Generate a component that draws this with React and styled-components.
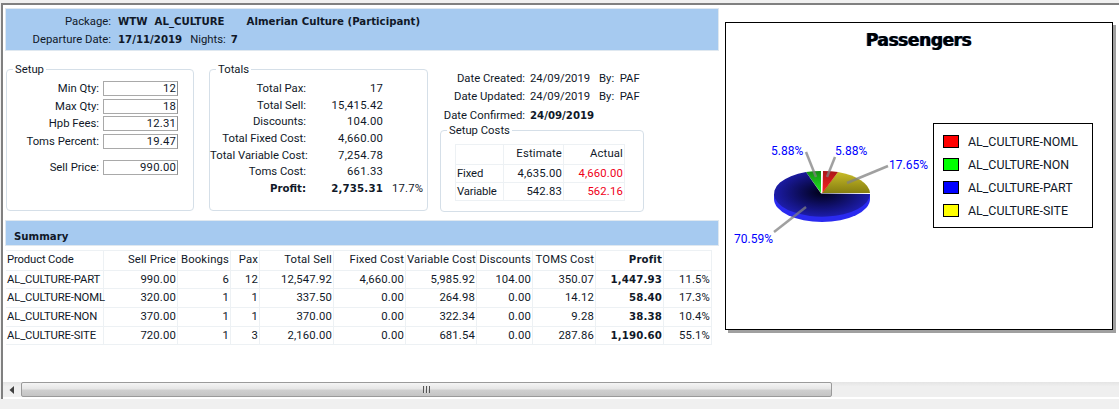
import React from 'react';
import styled, { createGlobalStyle } from 'styled-components';

const GlobalStyle = createGlobalStyle`
  html, body {
    margin: 0;
    padding: 0;
    background: #fff;
  }
  body {
    font-family: Roboto, "Noto Sans", sans-serif;
    font-size: 11.3px;
    color: #101828;
    overflow: hidden;
  }
`;

const BAND = '#a6caf0';
const LINE = '#d5dfe8';
const CELL = '#edf1f4';

const Page = styled.div`
  width: 1119px;
  height: 409px;
  display: flex;
  flex-direction: column;
  padding-top: 3px;
  box-sizing: border-box;
  background: #f0f0f0;
`;

const Frame = styled.div`
  height: 396px;
  display: flex;
  flex-direction: column;
  box-sizing: border-box;
  background: #fff;
  border-top: 2px solid #808080;
  border-left: 2px solid #808080;
  margin-left: 1px;
`;

const Main = styled.div`
  height: 377px;
  display: flex;
  gap: 7px;
  padding: 4px 0 0 3px;
  box-sizing: border-box;
`;

const Left = styled.div`
  width: 712px;
  display: flex;
  flex-direction: column;
`;

const Band = styled.div`
  background: ${BAND};
  height: ${p => p.$h}px;
  box-sizing: border-box;
  outline: 1px solid #dfe8f0;
`;

const HeadBand = styled(Band)`
  display: grid;
  grid-template-columns: 105px auto;
  grid-auto-rows: 18px;
  column-gap: 7px;
  padding-top: 4px;
  justify-content: start;
  line-height: 18px;
`;

const Caption = styled.span`
  text-align: right;
  white-space: nowrap;
`;

const Value = styled.span`
  display: flex;
`;

const Bold = styled.b`
  font-family: "DejaVu Sans", sans-serif;
  font-size: 10.2px;
  font-weight: 700;
  margin-left: ${p => p.$ml || 0}px;
  margin-right: ${p => p.$mr || 0}px;
  white-space: pre;
`;

const Middle = styled.div`
  height: 171px;
  display: flex;
  align-items: flex-start;
`;

const Group = styled.div`
  position: relative;
  box-sizing: border-box;
  width: ${p => p.$w}px;
  height: ${p => p.$h}px;
  margin-left: ${p => p.$ml || 0}px;
  margin-top: ${p => p.$mt}px;
  border: 1px solid ${LINE};
  border-radius: 4px;
`;

const Legend = styled.span`
  position: absolute;
  left: 6px;
  top: -8px;
  padding: 0 2px;
  background: #fff;
  line-height: 15px;
`;

const FieldList = styled.div`
  display: grid;
  grid-template-columns: 92px 75px;
  column-gap: 4px;
  grid-template-rows: 15px 15px 15px 15px 6px 15px;
  row-gap: 2.5px;
  padding-top: 11px;
  align-items: center;
`;

const FieldBox = styled.span`
  box-sizing: border-box;
  height: 15px;
  line-height: 13px;
  text-align: right;
  padding-right: 1px;
  border: 1px solid #a9a9a9;
  border-right-color: #8f8f8f;
  letter-spacing: 0.2px;
`;

const FieldGap = styled.div`
  grid-column: 1 / -1;
`;

const TotalsList = styled.div`
  display: grid;
  grid-template-columns: 96px 77px 40px;
  grid-auto-rows: 16.7px;
  padding-top: 11px;
  line-height: 16px;
`;

const TotalLabel = styled.span`
  text-align: right;
  white-space: nowrap;
`;

const TotalValue = styled.span`
  text-align: right;
  letter-spacing: 0.2px;
`;

const TotalPct = styled.span`
  padding-left: 9px;
  white-space: nowrap;
  letter-spacing: 0.2px;
`;

const InfoColumn = styled.div`
  width: 204px;
  margin-left: 12px;
  display: flex;
  flex-direction: column;
`;

const DateList = styled.div`
  display: grid;
  grid-template-columns: 90px 69px auto;
  grid-auto-rows: 18.5px;
  margin-top: 19.5px;
  margin-bottom: 5px;
  line-height: 18px;
  white-space: nowrap;
`;

const DateLabel = styled(Caption)`
  padding-right: 5px;
`;

const CostTable = styled.div`
  display: grid;
  grid-template-columns: 48px 60px 61px;
  grid-template-rows: 20px 18px 18px;
  margin: 13px 0 0 14px;
  border-top: 1px solid ${CELL};
  border-left: 1px solid ${CELL};
  width: max-content;
`;

const Cell = styled.div`
  box-sizing: border-box;
  border-right: 1px solid ${CELL};
  border-bottom: 1px solid ${CELL};
  padding: 0 1px;
  line-height: 17px;
  white-space: nowrap;
  text-align: ${p => (p.$left ? 'left' : 'right')};
  color: ${p => (p.$red ? '#f00018' : 'inherit')};
  letter-spacing: ${p => (p.$left ? '-0.15px' : '0.15px')};
`;

const SummaryBand = styled(Band)`
  padding: 8px 0 0 8px;
  line-height: 16px;
`;

const Sheet = styled.div`
  display: grid;
  grid-template-columns: 98px 74px 53px 29px 74px 72px 71px 56px 63px 68px 48px;
  grid-template-rows: 20px 18px 19px 19px 18px;
  margin-top: 5px;
  width: max-content;
  border-top: 1px solid ${CELL};
`;

const Chart = styled.div`
  width: 388px;
  height: 308px;
  margin-top: 13px;
  box-sizing: border-box;
  border: 1px solid #000;
  background: #fff;
  box-shadow: 3px 3px 0 #a0a0a0;
  display: flex;
  flex-direction: column;
`;

const ChartTitle = styled.div`
  height: 97px;
  padding-top: 6px;
  box-sizing: border-box;
  text-align: center;
  font-size: 17px;
  font-weight: 700;
  line-height: 22px;
  color: #000;
  font-family: "DejaVu Sans", sans-serif;
  text-shadow: -1px 0 0 #0a3a78;
  letter-spacing: -0.4px;
`;

const ChartBody = styled.div`
  display: flex;
  align-items: flex-start;
`;

const PieSvg = styled.svg`
  display: block;
  font-family: Roboto, sans-serif;
  font-size: 12px;
`;

const LegendBox = styled.div`
  width: 160px;
  height: 105px;
  margin-top: 3px;
  box-sizing: border-box;
  border: 1px solid #000;
  padding: 11px 0 0 9px;
  display: flex;
  flex-direction: column;
  gap: 10px;
  font-size: 12.4px;
`;

const LegendRow = styled.div`
  display: flex;
  align-items: center;
  gap: 9px;
  height: 13px;
`;

const Swatch = styled.span`
  width: 16px;
  height: 13px;
  box-sizing: border-box;
  border: 1px solid #000;
  background: ${p => p.$color};
`;

const Scroll = styled.div`
  height: 15px;
  display: flex;
  background: linear-gradient(#e4e4e4, #efefef 30%);
`;

const ScrollArrow = styled.div`
  width: 18px;
  display: flex;
  align-items: center;
  justify-content: center;
`;

const ScrollThumb = styled.div`
  width: 811px;
  box-sizing: border-box;
  border: 1px solid #9a9a9a;
  border-radius: 2px;
  background: linear-gradient(#f4f4f4, #e6e6e6 45%, #cfcfcf 55%, #c4c4c4);
  display: flex;
  align-items: center;
  justify-content: center;
`;

const Grip = styled.div`
  width: 7px;
  height: 7px;
  background: repeating-linear-gradient(90deg, #555 0 1px, #ddd 1px 2px, transparent 2px 3px);
`;

const heading = ['Product Code', 'Sell Price', 'Bookings', 'Pax', 'Total Sell', 'Fixed Cost', 'Variable Cost', 'Discounts', 'TOMS Cost', 'Profit', ''];

const rows = [
  ['AL_CULTURE-PART', '990.00', '6', '12', '12,547.92', '4,660.00', '5,985.92', '104.00', '350.07', '1,447.93', '11.5%'],
  ['AL_CULTURE-NOML', '320.00', '1', '1', '337.50', '0.00', '264.98', '0.00', '14.12', '58.40', '17.3%'],
  ['AL_CULTURE-NON', '370.00', '1', '1', '370.00', '0.00', '322.34', '0.00', '9.28', '38.38', '10.4%'],
  ['AL_CULTURE-SITE', '720.00', '1', '3', '2,160.00', '0.00', '681.54', '0.00', '287.86', '1,190.60', '55.1%'],
];

const legend = [
  ['AL_CULTURE-NOML', '#ff0000'],
  ['AL_CULTURE-NON', '#00ff00'],
  ['AL_CULTURE-PART', '#0000ff'],
  ['AL_CULTURE-SITE', '#ffff00'],
];

const totals = [
  ['Total Pax:', '17'],
  ['Total Sell:', '15,415.42'],
  ['Discounts:', '104.00'],
  ['Total Fixed Cost:', '4,660.00'],
  ['Total Variable Cost:', '7,254.78'],
  ['Toms Cost:', '661.33'],
];

function Pie() {
  return (
    <PieSvg width="207" height="130" viewBox="726 120 207 130">
      <defs>
        <radialGradient id="blueTop" gradientUnits="userSpaceOnUse" cx="822" cy="193" r="48" gradientTransform="translate(0 96) scale(1 0.5)">
          <stop offset="0" stopColor="#000018" />
          <stop offset="1" stopColor="#1c1ca8" />
        </radialGradient>
        <linearGradient id="yellowTop" x1="0" y1="0" x2="0" y2="1">
          <stop offset="0" stopColor="#c8bc28" />
          <stop offset="1" stopColor="#857d10" />
        </linearGradient>
        <linearGradient id="redTop" x1="0" y1="0" x2="0" y2="1">
          <stop offset="0" stopColor="#a81818" />
          <stop offset="1" stopColor="#ff2020" />
        </linearGradient>
        <linearGradient id="greenTop" x1="0" y1="0" x2="0" y2="1">
          <stop offset="0" stopColor="#148c14" />
          <stop offset="1" stopColor="#20f020" />
        </linearGradient>
      </defs>
      <path d="M774 194 v5 A48 23 0 0 0 870 199 v-5 Z" fill="#2a2af0" />
      <path d="M822 193 L870 193 A48 23 0 0 0 838 172 Z" fill="url(#yellowTop)" />
      <path d="M822.5 193 L838 172 A48 23 0 0 0 823 171 Z" fill="url(#redTop)" />
      <path d="M821 193 L821 171 A48 23 0 0 0 806 172 Z" fill="url(#greenTop)" />
      <path d="M821 193.5 L806 172 A48 23 0 1 0 870 194 Z" fill="url(#blueTop)" />
      <g stroke="#808080" strokeOpacity="0.75" strokeWidth="2.5" fill="none">
        <line x1="835" y1="157" x2="827" y2="177" />
        <line x1="806" y1="152" x2="816" y2="177" />
        <line x1="888" y1="166" x2="847" y2="183" />
        <line x1="774" y1="232" x2="806" y2="207" />
      </g>
      <g fill="#0000ff">
        <text x="771" y="155">5.88%</text>
        <text x="835" y="155">5.88%</text>
        <text x="889" y="169">17.65%</text>
        <text x="734" y="243">70.59%</text>
      </g>
    </PieSvg>
  );
}

export default function App() {
  return (
    <Page>
      <GlobalStyle />
      <Frame>
        <Main>
          <Left>
            <HeadBand $h={41}>
              <Caption>Package:</Caption>
              <Value>
                <Bold>WTW  AL_CULTURE</Bold>
                <Bold $ml={22}>Almerian Culture (Participant)</Bold>
              </Value>
              <Caption>Departure Date:</Caption>
              <Value>
                <Bold $mr={8}>17/11/2019</Bold>
                <span>Nights:</span>
                <Bold $ml={5}>7</Bold>
              </Value>
            </HeadBand>
            <Middle>
              <Group $w={188} $h={142} $mt={19}>
                <Legend>Setup</Legend>
                <FieldList>
                  <Caption>Min Qty:</Caption><FieldBox>12</FieldBox>
                  <Caption>Max Qty:</Caption><FieldBox>18</FieldBox>
                  <Caption>Hpb Fees:</Caption><FieldBox>12.31</FieldBox>
                  <Caption>Toms Percent:</Caption><FieldBox>19.47</FieldBox>
                  <FieldGap />
                  <Caption>Sell Price:</Caption><FieldBox>990.00</FieldBox>
                </FieldList>
              </Group>
              <Group $w={219} $h={142} $mt={19} $ml={15}>
                <Legend>Totals</Legend>
                <TotalsList>
                  {totals.map(([label, value]) => (
                    <React.Fragment key={label}>
                      <TotalLabel>{label}</TotalLabel>
                      <TotalValue>{value}</TotalValue>
                      <span />
                    </React.Fragment>
                  ))}
                  <TotalLabel><Bold>Profit:</Bold></TotalLabel>
                  <TotalValue><Bold>2,735.31</Bold></TotalValue>
                  <TotalPct>17.7%</TotalPct>
                </TotalsList>
              </Group>
              <InfoColumn>
                <DateList>
                  <DateLabel>Date Created:</DateLabel><span>24/09/2019</span><span>By:&nbsp; PAF</span>
                  <DateLabel>Date Updated:</DateLabel><span>24/09/2019</span><span>By:&nbsp; PAF</span>
                  <DateLabel>Date Confirmed:</DateLabel><Bold>24/09/2019</Bold><span />
                </DateList>
                <Group $w={204} $h={82} $mt={0}>
                  <Legend>Setup Costs</Legend>
                  <CostTable>
                    <Cell /><Cell>Estimate</Cell><Cell>Actual</Cell>
                    <Cell $left>Fixed</Cell><Cell>4,635.00</Cell><Cell $red>4,660.00</Cell>
                    <Cell $left>Variable</Cell><Cell>542.83</Cell><Cell $red>562.16</Cell>
                  </CostTable>
                </Group>
              </InfoColumn>
            </Middle>
            <SummaryBand $h={24}>
              <Bold>Summary</Bold>
            </SummaryBand>
            <Sheet>
              {heading.map((h, i) => (
                <Cell key={i} $left={i === 0}>{i === 9 ? <Bold>{h}</Bold> : h}</Cell>
              ))}
              {rows.map(row =>
                row.map((v, i) => (
                  <Cell key={row[0] + i} $left={i === 0}>
                    {i === 9 ? <Bold>{v}</Bold> : v}
                  </Cell>
                ))
              )}
            </Sheet>
          </Left>
          <Chart>
            <ChartTitle>Passengers</ChartTitle>
            <ChartBody>
              <Pie />
              <LegendBox>
                {legend.map(([name, color]) => (
                  <LegendRow key={name}>
                    <Swatch $color={color} />
                    <span>{name}</span>
                  </LegendRow>
                ))}
              </LegendBox>
            </ChartBody>
          </Chart>
        </Main>
        <Scroll>
          <ScrollArrow>
            <svg width="6" height="8" viewBox="0 0 6 8"><path d="M5 0 L0.5 4 L5 8 Z" fill="#404040" /></svg>
          </ScrollArrow>
          <ScrollThumb><Grip /></ScrollThumb>
        </Scroll>
      </Frame>
    </Page>
  );
}
